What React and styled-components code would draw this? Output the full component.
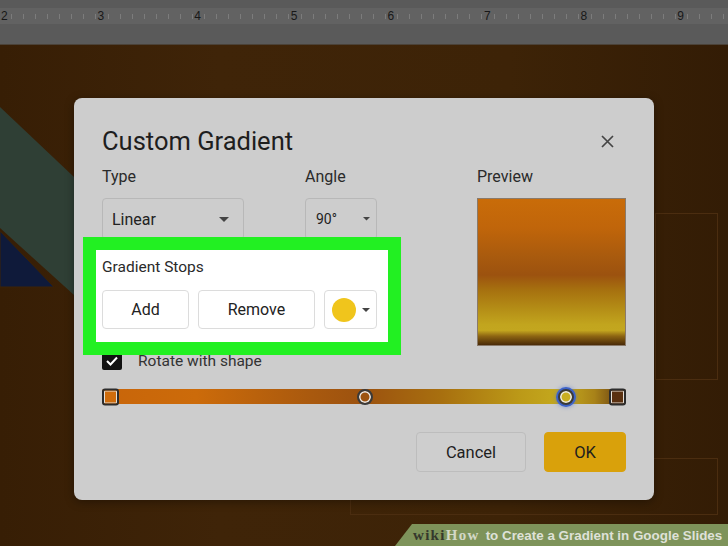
import React from 'react';
import styled, { createGlobalStyle } from 'styled-components';

const Global = createGlobalStyle`
  html, body { margin: 0; padding: 0; }
  body {
    width: 728px; height: 546px; overflow: hidden;
    background: #3c2206;
    font-family: Roboto, "Open Sans", Arial, sans-serif;
  }
`;

const Page = styled.div`
  width: 728px; height: 546px;
  display: flex; flex-direction: column;
  position: relative; overflow: hidden;
`;

const TopBar = styled.header`
  height: 45px; box-sizing: border-box;
  background: #5a5a5a;
  padding-top: 8px;
  border-bottom: 1px solid #4b4238;
`;

const Ruler = styled.div`
  height: 16px; background: #626262;
  display: flex; overflow: hidden;
`;

const RulerCell = styled.div`
  flex: 0 0 96.6px; box-sizing: border-box;
  padding-left: 1px;
  font: 12px "Liberation Sans", Arial, sans-serif;
  color: #181818; line-height: 16px;
  background-image: repeating-linear-gradient(to right, transparent 0 11px, #7c7c7c 11px 12px);
  background-size: 100% 5px; background-position: 0 6px; background-repeat: no-repeat;
`;

const Stage = styled.main`
  flex: 1; position: relative;
  padding: 53px 0 0 74px;
  background: linear-gradient(to right, #371e05 0%, #3f2408 30%, #3d2307 70%, #331c05 100%);
`;

const SlideArt = styled.svg`
  position: absolute; left: 0; top: 0;
`;

const SlideFrame = styled.div`
  position: absolute;
  left: ${p => p.$x}px; top: ${p => p.$y}px;
  width: ${p => p.$w}px; height: ${p => p.$h}px;
  border: 1px solid #4b2d10;
`;

const Dialog = styled.section`
  position: relative; z-index: 1;
  width: 580px; height: 402px; box-sizing: border-box;
  background: #cdcdcd;
  border-radius: 8px;
  padding: 26px 28px 28px;
  display: flex; flex-direction: column;
  box-shadow: 0 2px 10px rgba(0,0,0,0.35);
`;

const Header = styled.div`
  display: flex; align-items: center; justify-content: space-between;
  height: 34px;
`;

const Title = styled.h1`
  margin: 0; font-weight: 400;
  font-size: 25.5px; color: #1e1e1e;
`;

const CloseButton = styled.button`
  width: 38px; height: 38px; padding: 0;
  border: none; background: transparent;
  display: flex; align-items: center; justify-content: center;
`;

const Body = styled.div`
  display: grid;
  grid-template-columns: 1fr 149px;
  margin-top: 8px;
`;

const LeftCol = styled.div`
  display: flex; flex-direction: column;
`;

const FieldRow = styled.div`
  display: flex; gap: 61px;
`;

const Field = styled.div`
  display: flex; flex-direction: column; gap: 10px;
`;

const Label = styled.div`
  font-size: 16px; line-height: 22px; color: #2a2a2a;
`;

const Select = styled.div`
  box-sizing: border-box;
  width: ${p => p.$w}px; height: 42px;
  border: 1px solid #b8b8b8; border-radius: 4px;
  display: flex; align-items: center; justify-content: space-between;
  padding: 0 ${p => p.$pr}px 0 ${p => p.$pl}px;
  font-size: ${p => p.$fs}px; color: #222;
`;

const Highlight = styled.div`
  position: relative; z-index: 2;
  margin: -3px 0 0 -19px;
  width: 318px; box-sizing: border-box;
  border: 13px solid #22f022;
  background: #ffffff;
  padding: 7px 6px 13px;
`;

const SectionTitle = styled.div`
  font-size: 15.5px; line-height: 20px; color: #2a2a2a;
`;

const StopButtons = styled.div`
  display: flex; margin-top: 13px;
`;

const StopButton = styled.div`
  box-sizing: border-box;
  width: ${p => p.$w}px; height: 39px;
  margin-right: ${p => p.$mr || 0}px;
  border: 1px solid #dcdcdc; border-radius: 4px;
  background: #fff;
  display: flex; align-items: center; justify-content: ${p => p.$swatch ? 'flex-start' : 'center'};
  padding-left: ${p => p.$swatch ? 7 : 0}px;
  gap: 6px;
  font-size: 16px; color: #222;
`;

const Swatch = styled.span`
  width: 24px; height: 24px; border-radius: 50%;
  background: #f0c51c;
`;

const CheckRow = styled.div`
  position: relative; z-index: 1;
  display: flex; align-items: center; gap: 16px;
  margin-top: -4px; height: 20px;
`;

const CheckBox = styled.span`
  width: 20px; height: 18px; border-radius: 2px;
  background: #111;
  display: flex; align-items: center; justify-content: center;
`;

const CheckLabel = styled.span`
  font-size: 15.5px; color: #333;
`;

const PreviewCol = styled.div`
  display: flex; flex-direction: column; gap: 10px;
`;

const PreviewBox = styled.div`
  width: 149px; height: 148px; box-sizing: border-box;
  border: 1px solid #8a7a6a;
  background: linear-gradient(to bottom,
    #c96c09 0%, #c0650a 20%, #a85a0e 40%, #9c520f 52%,
    #a6700f 62%, #b48d16 75%, #c2a51e 86%, #c3a61f 90%,
    #8c6412 94%, #4a2a08 100%);
`;

const SliderTrack = styled.div`
  position: relative;
  margin-top: 18px;
  height: 15px; border-radius: 2px;
  background: linear-gradient(to right,
    #c8650a 0%, #cc6b0a 18%, #a9590e 40%, #9c520f 50%,
    #a8700f 65%, #bc9a18 80%, #c5aa1e 88%, #a88218 94%, #5b3312 100%);
`;

const StopSquare = styled.span`
  position: absolute; top: 50%;
  ${p => p.$side}: 0;
  transform: translateY(-50%);
  width: 17px; height: 17px; box-sizing: border-box;
  border: 2px solid #2c2c2c; border-radius: 3px;
  background: ${p => p.$color};
  box-shadow: inset 0 0 0 1px #e6e0d8;
`;

const StopCircle = styled.span`
  position: absolute; top: 50%;
  transform: translate(-50%, -50%);
  width: 16px; height: 16px; box-sizing: border-box;
  border-radius: 50%;
  border: 2px solid #3a3a3a;
  background: ${p => p.$color};
  box-shadow: inset 0 0 0 1.5px #eee ${p => p.$active ? ', 0 0 0 2px #3d63c9, 0 0 4px 2px rgba(70,110,220,0.6)' : ''};
`;

const Footer = styled.div`
  margin-top: auto;
  display: flex; justify-content: flex-end; gap: 18px;
`;

const FooterButton = styled.div`
  box-sizing: border-box;
  width: ${p => p.$w}px; height: 40px;
  border-radius: 4px;
  border: 1px solid ${p => p.$primary ? '#d9a10b' : '#bdbdbd'};
  background: ${p => p.$primary ? '#d9a10b' : '#cecece'};
  display: flex; align-items: center; justify-content: center;
  font-size: 16.5px; color: #1e1e1e;
`;

const Banner = styled.div`
  position: absolute; right: 0; bottom: 0; z-index: 3;
  width: 333px; height: 22px;
  background: #7e935a;
  clip-path: polygon(17px 0, 100% 0, 100% 100%, 0 100%);
  display: flex; align-items: center;
  padding-left: 18px; box-sizing: border-box;
  white-space: nowrap;
`;

const Wiki = styled.span`
  font: bold 15px "Liberation Serif", "Times New Roman", serif;
  letter-spacing: 1.3px;
  color: ${p => p.$light ? '#d3d8c6' : '#35382c'};
`;

const BannerText = styled.span`
  font: bold 13.4px "Liberation Sans", Arial, sans-serif;
  color: #dfe1d8;
  margin-left: 6px;
`;

const Caret = ({ size = 10 }) => (
  <svg width={size} height={size / 2} viewBox="0 0 10 5">
    <path d="M0 0 L10 0 L5 5 Z" fill="#444" />
  </svg>
);

export default function App() {
  const nums = [2, 3, 4, 5, 6, 7, 8, 9];
  return (
    <Page>
      <Global />
      <TopBar>
        <Ruler>
          {nums.map(n => <RulerCell key={n}>{n}</RulerCell>)}
        </Ruler>
      </TopBar>
      <Stage>
        <SlideArt width="80" height="260" viewBox="0 0 80 260">
          <polygon points="0,62 74,132 74,250 0,183" fill="#2f3f35" />
          <polygon points="0,186 54,242 0,242" fill="#0f1a3a" stroke="#3c2206" strokeWidth="1" />
        </SlideArt>
        <SlideFrame $x={655} $y={168} $w={61} $h={165} />
        <SlideFrame $x={350} $y={413} $w={366} $h={55} />
        <Dialog>
          <Header>
            <Title>Custom Gradient</Title>
            <CloseButton aria-label="Close">
              <svg width="13" height="13" viewBox="0 0 13 13">
                <path d="M1 1 L12 12 M12 1 L1 12" stroke="#444" strokeWidth="1.7" />
              </svg>
            </CloseButton>
          </Header>
          <Body>
            <LeftCol>
              <FieldRow>
                <Field>
                  <Label>Type</Label>
                  <Select $w={142} $pl={9} $pr={14} $fs={16}>
                    Linear <Caret size={10} />
                  </Select>
                </Field>
                <Field>
                  <Label>Angle</Label>
                  <Select $w={72} $pl={10} $pr={6} $fs={14}>
                    90° <Caret size={7} />
                  </Select>
                </Field>
              </FieldRow>
              <Highlight>
                <SectionTitle>Gradient Stops</SectionTitle>
                <StopButtons>
                  <StopButton $w={87} $mr={9}>Add</StopButton>
                  <StopButton $w={117} $mr={9}>Remove</StopButton>
                  <StopButton $w={53} $swatch>
                    <Swatch />
                    <Caret size={8} />
                  </StopButton>
                </StopButtons>
              </Highlight>
              <CheckRow>
                <CheckBox>
                  <svg width="12" height="10" viewBox="0 0 12 10">
                    <path d="M1 5 L4.5 8.5 L11 1.5" stroke="#fff" strokeWidth="2" fill="none" />
                  </svg>
                </CheckBox>
                <CheckLabel>Rotate with shape</CheckLabel>
              </CheckRow>
            </LeftCol>
            <PreviewCol>
              <Label>Preview</Label>
              <PreviewBox />
            </PreviewCol>
          </Body>
          <SliderTrack>
            <StopSquare $side="left" $color="#cf6c0c" />
            <StopCircle style={{ left: '50.2%' }} $color="#9d5310" />
            <StopCircle style={{ left: '88.5%' }} $color="#c9ae22" $active />
            <StopSquare $side="right" $color="#5a3010" />
          </SliderTrack>
          <Footer>
            <FooterButton $w={110}>Cancel</FooterButton>
            <FooterButton $w={82} $primary>OK</FooterButton>
          </Footer>
        </Dialog>
        <Banner>
          <Wiki>wiki</Wiki><Wiki $light>How</Wiki>
          <BannerText>to Create a Gradient in Google Slides</BannerText>
        </Banner>
      </Stage>
    </Page>
  );
}
